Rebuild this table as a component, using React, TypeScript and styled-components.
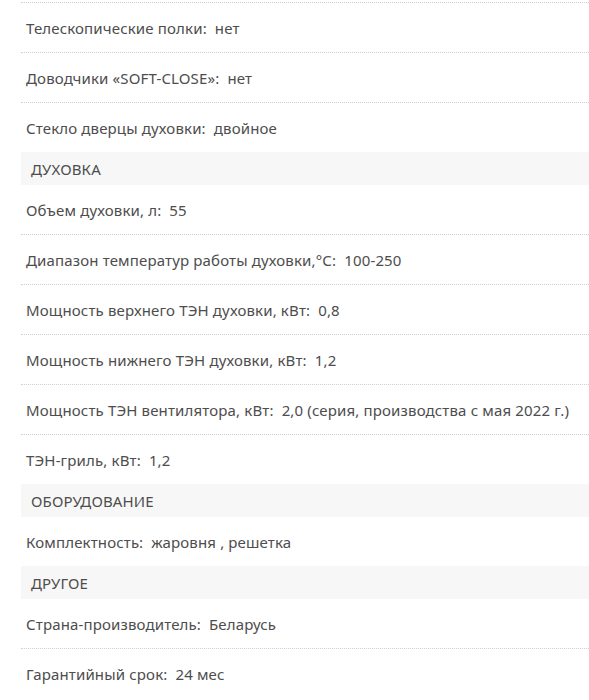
import React from "react";
import styled, { createGlobalStyle } from "styled-components";

const Global = createGlobalStyle`
  html, body { margin: 0; padding: 0; background: #fff; }
  body { font-family: "Noto Sans", "Open Sans", sans-serif; }
`;

const Page = styled.div`
  padding: 2px 0 0 21px;
`;

const Group = styled.div`
  display: flex;
  flex-direction: column;
`;

const Header = styled.div`
  height: 33px;
  background: #f7f7f7;
  display: flex;
  align-items: center;
  padding-left: 10px;
  font-size: 15px;
  letter-spacing: 0.15px;
  color: #4d4d4d;
  text-transform: uppercase;
`;

const Row = styled.div<{ $last?: boolean; $first?: boolean }>`
  height: 49px;
  display: flex;
  align-items: center;
  padding-left: 5px;
  font-size: 15px;
  letter-spacing: 0.15px;
  color: #4d4d4d;
  border-top: ${(p) => (p.$first ? "1px dotted #d0d0d0" : "0")};
  border-bottom: ${(p) => (p.$last ? "0" : "1px dotted #d0d0d0")};
  white-space: nowrap;
`;

const Value = styled.span`
  margin-left: 8px;
`;

type Item = [string, string];
const groups: { title?: string; items: Item[] }[] = [
  {
    items: [
      ["Телескопические полки:", "нет"],
      ["Доводчики «SOFT-CLOSE»:", "нет"],
      ["Стекло дверцы духовки:", "двойное"],
    ],
  },
  {
    title: "Духовка",
    items: [
      ["Объем духовки, л:", "55"],
      ["Диапазон температур работы духовки,°С:", "100-250"],
      ["Мощность верхнего ТЭН духовки, кВт:", "0,8"],
      ["Мощность нижнего ТЭН духовки, кВт:", "1,2"],
      ["Мощность ТЭН вентилятора, кВт:", "2,0 (серия, производства с мая 2022 г.)"],
      ["ТЭН-гриль, кВт:", "1,2"],
    ],
  },
  { title: "Оборудование", items: [["Комплектность:", "жаровня , решетка"]] },
  {
    title: "Другое",
    items: [
      ["Страна-производитель:", "Беларусь"],
      ["Гарантийный срок:", "24 мес"],
    ],
  },
];

export default function App() {
  return (
    <>
      <Global />
      <Page>
        {groups.map((g, gi) => (
          <Group key={gi}>
            {g.title && <Header>{g.title}</Header>}
            {g.items.map(([k, v], i) => (
              <Row key={i} $first={gi === 0 && i === 0} $last={i === g.items.length - 1}>
                {k}
                <Value>{v}</Value>
              </Row>
            ))}
          </Group>
        ))}
      </Page>
    </>
  );
}
